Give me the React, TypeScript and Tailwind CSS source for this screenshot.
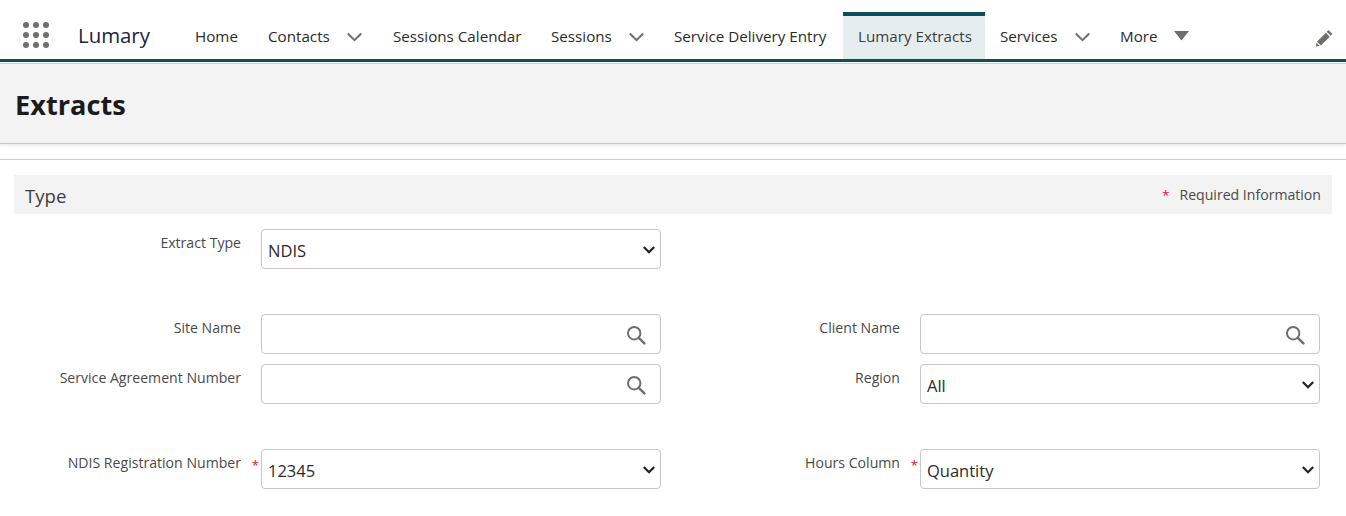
import React from "react";

const font = { fontFamily: '"Open Sans", "Noto Sans", sans-serif' };

function Chevron() {
  return (
    <svg width="15" height="10" viewBox="0 0 15 10" className="ml-[17px] mt-[2px]" fill="none">
      <path d="M0.8 1.5 L7.5 8.2 L14.2 1.5" stroke="#706e6b" strokeWidth="2" />
    </svg>
  );
}

function NavItem({ label, w, chevron, tri, active }: { label: string; w: string; chevron?: boolean; tri?: boolean; active?: boolean }) {
  return (
    <div className={`${w} h-full flex items-center pl-[15px] whitespace-nowrap text-[15.2px] ${active ? "bg-[#e6edef] border-t-[4px] border-[#0b4f5c] text-[#3e3e3c] pb-[3px]" : "pt-[1px] text-[#2b2b2b]"}`}>
      <div className="flex items-center">
        <span>{label}</span>
        {chevron && <Chevron />}
        {tri && (
          <svg width="15" height="10" viewBox="0 0 15 10" className="ml-[16px]">
            <path d="M0 0 H15 L7.5 9.5 Z" fill="#706e6b" />
          </svg>
        )}
      </div>
    </div>
  );
}

function Search() {
  return (
    <svg width="20" height="20" viewBox="0 0 20 20" fill="none" className="absolute right-[14px] top-[10px]">
      <circle cx="8.2" cy="8.2" r="6.2" stroke="#706e6b" strokeWidth="2" />
      <path d="M12.8 12.8 L18.4 18.4" stroke="#706e6b" strokeWidth="2.4" strokeLinecap="round" />
    </svg>
  );
}

function Field({ label, labelW, req, children }: { label: string; labelW: string; req?: boolean; children: React.ReactNode }) {
  return (
    <div className="flex">
      <label className={`${labelW} text-right text-[14.1px] text-[#4a4a4a] pt-[4px] leading-[20px] whitespace-nowrap`}>{label}</label>
      <div className="w-5 relative text-[#e4122a] text-[13px] leading-[20px]">
        {req && <span className="absolute right-[2px] top-[6px]">*</span>}
      </div>
      {children}
    </div>
  );
}

function Sel({ value }: { value: string }) {
  return (
    <div className="relative w-[400px] h-10">
      <select
        defaultValue={value}
        className="appearance-none w-full h-full bg-white border border-[#c9c7c5] rounded-[4px] pl-[6px] pr-6 pt-[5px] text-[16.5px] text-[#2b2b2b] outline-none"
        style={font}
      >
        <option>{value}</option>
      </select>
      <svg width="12" height="8" viewBox="0 0 12 8" fill="none" className="absolute right-[6px] top-[17px] pointer-events-none">
        <path d="M0.8 1 L6 6.2 L11.2 1" stroke="#222222" strokeWidth="2.2" />
      </svg>
    </div>
  );
}

function Lookup() {
  return (
    <div className="relative w-[400px] h-10 bg-white border border-[#c9c7c5] rounded-[4px]">
      <Search />
    </div>
  );
}

export default function App() {
  return (
    <div className="w-[1346px] h-[516px] overflow-hidden bg-white flex flex-col" style={font}>
      <nav className="h-[62px] shrink-0 flex items-stretch border-b-[3px] border-[#0b4f5c] pt-[12px]">
        <div className="w-[78px] flex items-center pl-[23px] -mt-[12px] pt-[12px] shrink-0">
          <svg width="26" height="26" viewBox="0 0 26 26" fill="#706e6b" className="mt-[-1px]">
            {[3, 13, 23].flatMap((y) => [3, 13, 23].map((x) => <circle key={`${x}-${y}`} cx={x} cy={y} r="3" />))}
          </svg>
        </div>
        <div className="w-[102px] shrink-0 pt-[8px] text-[20.4px] leading-[30px] text-[#1c2340]">Lumary</div>
        <NavItem label="Home" w="w-[73px]" />
        <NavItem label="Contacts" w="w-[125px]" chevron />
        <NavItem label="Sessions Calendar" w="w-[158px]" />
        <NavItem label="Sessions" w="w-[123px]" chevron />
        <NavItem label="Service Delivery Entry" w="w-[184px]" />
        <NavItem label="Lumary Extracts" w="w-[142px]" active />
        <NavItem label="Services" w="w-[120px]" chevron />
        <NavItem label="More" w="w-[100px]" tri />
        <div className="flex-1 flex justify-end pr-[13px] pt-[17px]">
          <svg width="17" height="18" viewBox="0 0 18 18" fill="#706e6b">
            <path d="M13.2 0.6 L17.4 4.8 L15.6 6.6 L11.4 2.4 Z" />
            <path d="M10.4 3.4 L14.6 7.6 L5.2 17 L1 13 Z" />
            <path d="M0.4 14 L4 17.6 L0 18 Z" />
          </svg>
        </div>
      </nav>
      <div className="h-px mt-px bg-[#cfcfcf] shrink-0" />
      <header className="h-[80px] shrink-0 bg-[#f3f3f3] border-b border-[#c9c9c9] shadow-[0_2px_2px_rgba(0,0,0,0.08)] flex items-center pl-[15px]">
        <h1 className="text-[27.2px] font-bold text-[#1b1b1b] leading-none mt-[2px]">Extracts</h1>
      </header>
      <div className="h-px mt-[15px] bg-[#cfcfcf] shrink-0" />
      <section className="mx-[14px] mt-[15px] h-[39px] shrink-0 bg-[#f3f3f3] flex items-center justify-between pl-[11px] pr-[11px]">
        <span className="text-[18.6px] text-[#3e3e3c] mt-[2px]">Type</span>
        <span className="text-[14.1px] text-[#4a4a4a] mt-[1px]">
          <span className="text-[#e4122a] text-[13px] mr-[10px]">*</span>Required Information
        </span>
      </section>
      <div className="mt-[15px] flex">
        <Field label="Extract Type" labelW="w-[241px]"><Sel value="NDIS" /></Field>
      </div>
      <div className="mt-[45px] flex">
        <Field label="Site Name" labelW="w-[241px]"><Lookup /></Field>
        <Field label="Client Name" labelW="w-[239px]"><Lookup /></Field>
      </div>
      <div className="mt-[10px] flex">
        <Field label="Service Agreement Number" labelW="w-[241px]"><Lookup /></Field>
        <Field label="Region" labelW="w-[239px]"><Sel value="All" /></Field>
      </div>
      <div className="mt-[45px] flex">
        <Field label="NDIS Registration Number" labelW="w-[241px]" req><Sel value="12345" /></Field>
        <Field label="Hours Column" labelW="w-[239px]" req><Sel value="Quantity" /></Field>
      </div>
    </div>
  );
}
